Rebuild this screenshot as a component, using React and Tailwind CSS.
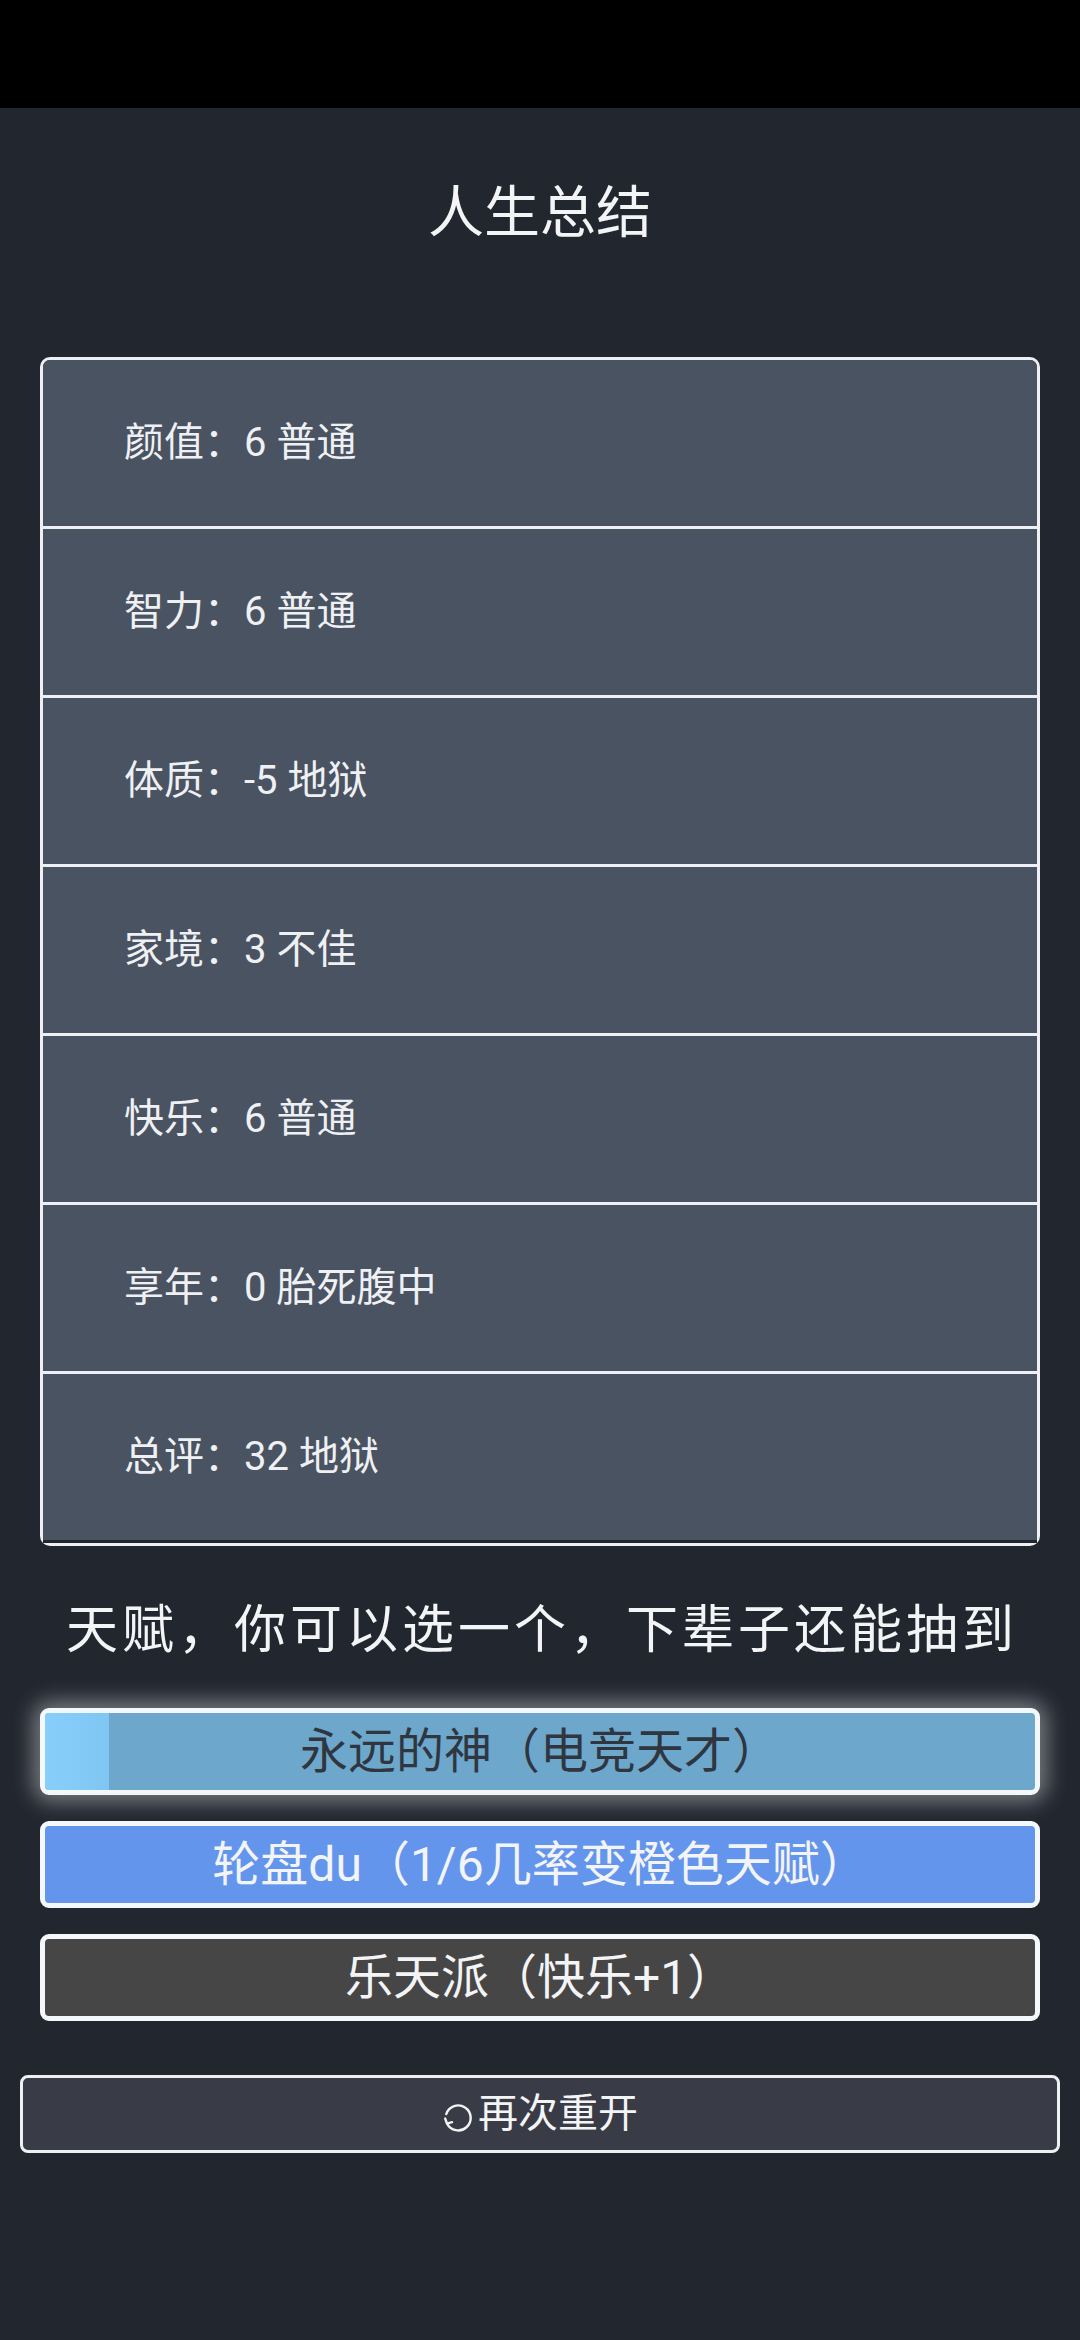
import React from "react";

const rows = [
  "颜值：6 普通",
  "智力：6 普通",
  "体质：-5 地狱",
  "家境：3 不佳",
  "快乐：6 普通",
  "享年：0 胎死腹中",
  "总评：32 地狱",
];

function RestartIcon() {
  return (
    <svg width="32" height="32" viewBox="0 0 32 32" fill="none" className="mr-[4px] mt-[8px]">
      <path
        d="M4.3 12 A12.5 12.5 0 1 1 5 21.5"
        stroke="#f3f4f6"
        strokeWidth="2.4"
        strokeLinecap="round"
        fill="none"
      />
      <path
        d="M3.2 16.6 L5 21.6 L10 20.2"
        stroke="#f3f4f6"
        strokeWidth="2.4"
        strokeLinecap="round"
        strokeLinejoin="round"
        fill="none"
      />
    </svg>
  );
}

export default function App() {
  return (
    <div
      className="w-[1080px] min-h-[2340px] bg-[#21262f] flex flex-col"
      style={{ fontFamily: "Roboto, 'Noto Sans CJK SC', sans-serif" }}
    >
      <div className="h-[108px] bg-black shrink-0" />
      <div className="h-[210px] flex items-center justify-center text-[56px] leading-[60px] text-[#f3f4f6]">
        人生总结
      </div>

      <div className="mx-[40px] mt-[39px] border-[3px] border-[#eef0f3] rounded-[10px] flex flex-col">
        {rows.map((r, i) => (
          <div
            key={i}
            className={
              "h-[169px] bg-[#4a5361] flex items-center pl-[81px] text-[40px] text-[#eef0f3] border-b-[3px] " +
              (i === rows.length - 1 ? "border-[#21262f]" : "border-[#eef0f3]") +
              (i === 0 ? " rounded-t-[7px]" : "")
            }
          >
            {r}
          </div>
        ))}
      </div>

      <div className="mt-[55px] h-[60px] flex items-center justify-center text-[52px] leading-[60px] tracking-[4px] text-[#f3f4f6] pl-[4px]">
        天赋，你可以选一个，下辈子还能抽到
      </div>

      <div className="mx-[40px] mt-[47px] flex flex-col gap-[26px]">
        <div className="h-[87px] rounded-[9px] border-[5px] border-[#f5f8fa] bg-[#6da7cc] shadow-[0_0_22px_6px_rgba(255,255,255,0.42)] flex items-center justify-center relative overflow-hidden">
          <div className="absolute left-0 top-0 bottom-0 w-[64px] bg-gradient-to-r from-[#87cefa] to-[#80c6f2]" />
          <span className="relative text-[48px] text-[#2f3640]">永远的神（电竞天才）</span>
        </div>
        <div className="h-[87px] rounded-[9px] border-[5px] border-[#f5f8fa] bg-[#6495ed] flex items-center justify-center">
          <span className="text-[48px] text-[#f3f4f6]">轮盘du（1/6几率变橙色天赋）</span>
        </div>
        <div className="h-[87px] rounded-[9px] border-[5px] border-[#f5f8fa] bg-[#464646] flex items-center justify-center">
          <span className="text-[48px] text-[#f3f4f6]">乐天派（快乐+1）</span>
        </div>
      </div>

      <div className="mx-[20px] mt-[54px] h-[78px] rounded-[8px] border-[3px] border-[#eef0f3] bg-[#393c46] flex items-center justify-center text-[40px] text-[#f3f4f6]">
        <RestartIcon />
        <span>再次重开</span>
      </div>
    </div>
  );
}
